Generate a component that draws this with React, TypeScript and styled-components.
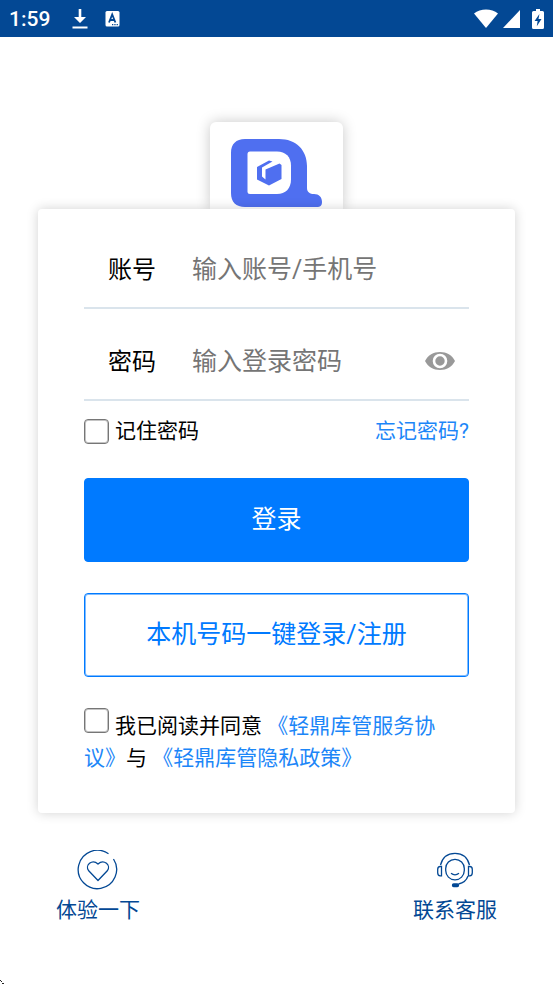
import React, { useState } from 'react';
import styled, { createGlobalStyle } from 'styled-components';

const navy = '#034894';
const blue = '#007aff';
const linkBlue = '#1c86f8';

const GlobalStyle = createGlobalStyle`
  *, *::before, *::after { box-sizing: border-box; }
  body {
    margin: 0;
    background: #fff;
    color: #000;
    font-family: Roboto, "Noto Sans CJK SC", sans-serif;
    font-size: 21px;
    line-height: 32px;
  }
  button, input { font: inherit; }
`;

const Screen = styled.div`
  position: relative;
  display: flex;
  flex-direction: column;
  min-height: 100vh;
`;

const StatusBar = styled.header`
  display: flex;
  align-items: center;
  justify-content: space-between;
  height: 37px;
  padding: 0 9px;
  background: ${navy};
  color: #fff;
`;

const StatusGroup = styled.div<{ $gap: number }>`
  display: flex;
  align-items: center;
  gap: ${(p) => p.$gap}px;
`;

const Clock = styled.time`
  font-size: 21px;
  line-height: 24px;
  font-weight: 500;
  margin-right: 5px;
`;

const LogoTile = styled.div`
  align-self: center;
  width: 133px;
  height: 87px;
  margin-top: 85px;
  padding: 17px 20px 0 21px;
  border-radius: 6px 6px 0 0;
  background: #fff;
  box-shadow: 0 0 14px rgba(0, 0, 0, 0.22);
`;

const LoginCard = styled.form`
  position: relative;
  margin: 0 38px;
  padding: 8px 46px 39px;
  border-radius: 4px;
  background: #fff;
  box-shadow: 0 0 12px rgba(0, 0, 0, 0.18);
`;

const Field = styled.div`
  display: flex;
  align-items: center;
  height: 92px;
  padding: 15px 10px 0 24px;
  border-bottom: 2px solid #dae4ec;
`;

const FieldLabel = styled.label`
  flex: none;
  width: 84px;
  font-size: 24px;
`;

const FieldInput = styled.input`
  flex: 1;
  min-width: 0;
  padding: 0;
  border: 0;
  outline: 0;
  background: transparent;
  font-size: 25px;
  &::placeholder { color: #757575; opacity: 1; }
`;

const IconButton = styled.button`
  display: flex;
  padding: 4px;
  border: 0;
  background: none;
`;

const Options = styled.div`
  display: flex;
  align-items: center;
  justify-content: space-between;
  height: 60px;
  margin-bottom: 17px;
`;

const CheckLabel = styled.label`
  display: flex;
  align-items: center;
  gap: 6px;
`;

const Checkbox = styled.input`
  appearance: none;
  flex: none;
  width: 25px;
  height: 25px;
  margin: 0;
  border: 1px solid #767676;
  border-radius: 4px;
  background: #fff;
  box-shadow: inset 0 0 0 1px #c4c4c4;
  &:checked { background: ${blue}; border-color: ${blue}; }
`;

const TextLink = styled.a`
  color: ${linkBlue};
  text-decoration: none;
`;

const ActionButton = styled.button<{ $outline?: boolean }>`
  display: block;
  width: 100%;
  height: 84px;
  padding: 0;
  border: 1px solid ${blue};
  border-radius: 4px;
  background: ${(p) => (p.$outline ? '#fff' : blue)};
  box-shadow: inset 0 0 0 1px ${(p) => (p.$outline ? '#80bcff' : blue)};
  color: ${(p) => (p.$outline ? blue : '#fff')};
  font-size: 25px;
  & + & { margin-top: 31px; }
`;

const Agreement = styled.div`
  margin-top: 31px;
  text-spacing-trim: space-all;
  word-break: break-all;
  ${Checkbox} {
    margin-right: 6px;
    vertical-align: 0;
  }
`;

const Footer = styled.footer`
  display: flex;
  justify-content: space-between;
  padding: 37px 56px 0;
`;

const FooterLink = styled.a`
  display: flex;
  flex-direction: column;
  align-items: center;
  gap: 4px;
  color: ${navy};
  text-decoration: none;
`;

const CornerMark = styled.svg`
  position: absolute;
  left: 0;
  bottom: 0;
`;

function DownloadIcon() {
  return (
    <svg width="16" height="22" viewBox="0 0 16 22" fill="#fff" aria-hidden="true">
      <path d="M6.7 1h2.6v8H14l-6 6-6-6h4.7zM.5 18.5h15v2H.5z" />
    </svg>
  );
}

function InputMethodIcon() {
  return (
    <svg width="15" height="16" viewBox="0 0 15 16" aria-hidden="true">
      <rect width="14" height="15.5" x=".5" rx="1.5" fill="#fff" />
      <path d="M4 11.5 7.2 3.5l3.2 8M5.2 9h4" fill="none" stroke={navy} strokeWidth="1.8" />
      <path d="M7 13h1.3v1.3H7zm2.3 0h1.3v1.3H9.3zm2.3 0h1.3v1.3h-1.3z" fill={navy} />
    </svg>
  );
}

function WifiIcon() {
  return (
    <svg width="24" height="19" viewBox="0 0 24 19" fill="#fff" aria-hidden="true">
      <path d="M0 4.4C6.5-.7 17.5-.7 24 4.4L12 19z" />
    </svg>
  );
}

function SignalIcon() {
  return (
    <svg width="17" height="18" viewBox="0 0 17 18" fill="#fff" aria-hidden="true">
      <path d="M17 0v18H0z" />
    </svg>
  );
}

function BatteryIcon() {
  return (
    <svg width="12" height="20" viewBox="0 0 12 20" aria-hidden="true">
      <path d="M4 0h4v2h2.5Q12 2 12 3.5v15q0 1.5-1.5 1.5h-9Q0 20 0 18.5v-15Q0 2 1.5 2H4z" fill="#fff" />
      <path d="M7.4 5 2.6 12h3L4.8 17.2 9.5 10h-3z" fill={navy} />
    </svg>
  );
}

function Logo() {
  return (
    <svg width="92" height="69" viewBox="0 0 92 69" role="img" aria-label="轻鼎库管">
      <path
        d="M14 0h34c17 0 28 11 28 27v22c0 4 3 6 7 6 5 0 8 3 8 8 0 4-2 5-5 5H14C5 68 0 63 0 54V14C0 5 5 0 14 0z"
        fill="#4f6ff0"
      />
      <path d="M19 12.500h27c8.500 0 14 5.500 14 14v14c0 9-5.500 14.500-14 14.500H19q-2.500 0-2.500-2.500V15q0-2.500 2.500-2.500z" fill="#fff" />
      <path
        d="M26 28 38 21.500l3.500 1-10.500 6v9l3.500 3v-10L48.500 24.500 50.500 26v14L38 46.500 26 40.500z"
        fill="#4f6ff0"
      />
    </svg>
  );
}

function EyeIcon() {
  return (
    <svg width="30" height="20" viewBox="0 0 30 20" aria-hidden="true">
      <path d="M0 9C3 3 8.500 0 15 0s12 3 15 9c-3 6-8.500 9-15 9S3 15 0 9z" fill="#999" />
      <circle cx="15" cy="9" r="6" fill="#999" stroke="#fff" strokeWidth="2.600" />
    </svg>
  );
}

function HeartIcon() {
  return (
    <svg width="42" height="40" viewBox="0 0 42 40" fill="none" stroke={navy} strokeWidth="1.300" aria-hidden="true">
      <path d="M31.500 3.800A19.200 19.200 0 1 0 36.500 9" />
      <path d="M21 30.500 11.700 20.800C7.500 15.500 15 8.500 21 14c6-5.500 13.500 1.500 9.300 6.800z" strokeLinejoin="round" />
    </svg>
  );
}

function SupportIcon() {
  return (
    <svg width="40" height="40" viewBox="0 0 40 40" fill="none" stroke={navy} strokeWidth="1.300" aria-hidden="true">
      <path d="M5.500 15C7.500 7 13 3.300 20 3.300S32.500 7 34.500 15" />
      <rect x="10.700" y="9.300" width="18.600" height="20.500" rx="9.200" />
      <path d="M16 23.300q4 3 8 0" />
      <path d="M6.500 16.500v9.300H5.200q-2.500 0-2.500-3v-3.300q0-3 2.500-3zM33.500 16.500v9.300h1.300q2.500 0 2.500-3v-3.300q0-3-2.500-3zM33 26c-1.500 4.500-4.500 7-9.500 8" />
      <rect x="17.500" y="34" width="6" height="2.500" rx="1.200" fill={navy} />
    </svg>
  );
}

export default function App() {
  const [visible, setVisible] = useState(false);
  return (
    <>
      <GlobalStyle />
      <Screen>
        <StatusBar>
          <StatusGroup $gap={17}>
            <Clock>1:59</Clock>
            <DownloadIcon />
            <InputMethodIcon />
          </StatusGroup>
          <StatusGroup $gap={12}>
            <StatusGroup $gap={5}>
              <WifiIcon />
              <SignalIcon />
            </StatusGroup>
            <BatteryIcon />
          </StatusGroup>
        </StatusBar>

        <LogoTile>
          <Logo />
        </LogoTile>

        <LoginCard onSubmit={(e) => e.preventDefault()}>
          <Field>
            <FieldLabel htmlFor="account">账号</FieldLabel>
            <FieldInput id="account" type="text" placeholder="输入账号/手机号" />
          </Field>
          <Field>
            <FieldLabel htmlFor="password">密码</FieldLabel>
            <FieldInput id="password" type={visible ? 'text' : 'password'} placeholder="输入登录密码" />
            <IconButton type="button" aria-label="显示密码" onClick={() => setVisible(!visible)}>
              <EyeIcon />
            </IconButton>
          </Field>

          <Options>
            <CheckLabel htmlFor="remember">
              <Checkbox id="remember" type="checkbox" />
              记住密码
            </CheckLabel>
            <TextLink href="#forgot">忘记密码?</TextLink>
          </Options>

          <ActionButton type="submit">登录</ActionButton>
          <ActionButton type="button" $outline>
            本机号码一键登录/注册
          </ActionButton>

          <Agreement>
            <Checkbox id="agree" type="checkbox" />
            <label htmlFor="agree">我已阅读并同意</label>{' '}
            <TextLink href="#terms">《轻鼎库管服务协议》</TextLink>与{' '}
            <TextLink href="#privacy">《轻鼎库管隐私政策》</TextLink>
          </Agreement>
        </LoginCard>

        <Footer>
          <FooterLink href="#trial">
            <HeartIcon />
            体验一下
          </FooterLink>
          <FooterLink href="#support">
            <SupportIcon />
            联系客服
          </FooterLink>
        </Footer>

        <CornerMark width="4" height="4" viewBox="0 0 4 4" aria-hidden="true">
          <path d="M0 0h1v1H0zM1 1h1v1H1zM2 3h2v1H2z" fill="#222" />
        </CornerMark>
      </Screen>
    </>
  );
}
